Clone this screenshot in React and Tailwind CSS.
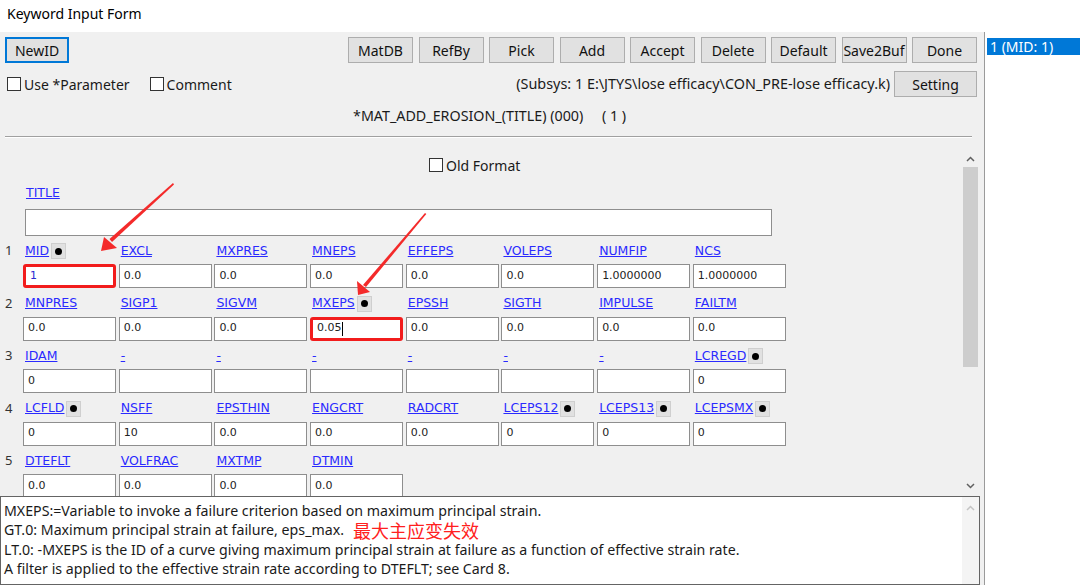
import React from 'react';

const rows = [
  [
    { l: 'MID', dot: true, v: '1', red: true, blue: true },
    { l: 'EXCL', v: '0.0' },
    { l: 'MXPRES', v: '0.0' },
    { l: 'MNEPS', v: '0.0' },
    { l: 'EFFEPS', v: '0.0' },
    { l: 'VOLEPS', v: '0.0' },
    { l: 'NUMFIP', v: '1.0000000' },
    { l: 'NCS', v: '1.0000000' },
  ],
  [
    { l: 'MNPRES', v: '0.0' },
    { l: 'SIGP1', v: '0.0' },
    { l: 'SIGVM', v: '0.0' },
    { l: 'MXEPS', dot: true, v: '0.05', red: true, caret: true },
    { l: 'EPSSH', v: '0.0' },
    { l: 'SIGTH', v: '0.0' },
    { l: 'IMPULSE', v: '0.0' },
    { l: 'FAILTM', v: '0.0' },
  ],
  [
    { l: 'IDAM', v: '0' },
    { l: '-', v: '' },
    { l: '-', v: '' },
    { l: '-', v: '' },
    { l: '-', v: '' },
    { l: '-', v: '' },
    { l: '-', v: '' },
    { l: 'LCREGD', dot: true, v: '0' },
  ],
  [
    { l: 'LCFLD', dot: true, v: '0' },
    { l: 'NSFF', v: '10' },
    { l: 'EPSTHIN', v: '0.0' },
    { l: 'ENGCRT', v: '0.0' },
    { l: 'RADCRT', v: '0.0' },
    { l: 'LCEPS12', dot: true, v: '0' },
    { l: 'LCEPS13', dot: true, v: '0' },
    { l: 'LCEPSMX', dot: true, v: '0' },
  ],
  [
    { l: 'DTEFLT', v: '0.0' },
    { l: 'VOLFRAC', v: '0.0' },
    { l: 'MXTMP', v: '0.0' },
    { l: 'DTMIN', v: '0.0' },
  ],
];

const buttons = ['MatDB', 'RefBy', 'Pick', 'Add', 'Accept', 'Delete', 'Default', 'Save2Buf', 'Done'];

function Btn({ children }) {
  return (
    <div className="h-[26px] w-[65px] bg-[#e1e1e1] border border-[#adadad] flex items-center justify-center text-[14px] text-[#111]">
      {children}
    </div>
  );
}

function Check({ label }) {
  return (
    <div className="flex items-center gap-[3px]">
      <span className="w-[14px] h-[14px] bg-white border border-[#333]" />
      <span className="text-[14px] text-[#1a1a1a]">{label}</span>
    </div>
  );
}

function Dot() {
  return (
    <span className="ml-[2px] w-[15px] h-[16px] bg-[#e1e1e1] border border-[#cfcfcf] flex items-center justify-center">
      <span className="w-[7px] h-[7px] rounded-full bg-black" />
    </span>
  );
}

function Chevron({ up, color = '#606060' }) {
  return (
    <svg width="9" height="6" viewBox="0 0 9 6">
      <polyline
        points={up ? '1,5 4.5,1.5 8,5' : '1,1 4.5,4.5 8,1'}
        fill="none"
        stroke={color}
        strokeWidth="1.5"
      />
    </svg>
  );
}

function Field({ f }) {
  return (
    <div className="w-[93px] flex flex-col">
      <div className="h-[20px] pl-[2px] flex items-center">
        <span className="text-[12.5px] text-[#2a2aff] underline font-['DejaVu_Sans',sans-serif]">{f.l}</span>
        {f.dot && <Dot />}
      </div>
      <div
        className={`mt-[3px] h-[24px] shrink-0 bg-white flex items-center pl-[4px] text-[11px] font-['DejaVu_Sans',sans-serif] ${
          f.red ? 'border-[3px] border-[#f21c1c] rounded-[3px]' : 'border border-[#8e8e8e]'
        } ${f.blue ? 'text-[#2a2ad0]' : 'text-[#222]'}`}
      >
        {f.v}
        {f.caret && <span className="w-[1px] h-[14px] bg-black" />}
      </div>
    </div>
  );
}

export default function App() {
  return (
    <div className="relative w-[1080px] h-[585px] overflow-hidden bg-white flex flex-col font-['Noto_Sans',sans-serif]">
      {/* title bar */}
      <div className="h-[32px] shrink-0 pl-[7px] pt-[3px] text-[14px] text-black leading-[22px]">Keyword Input Form</div>

      <div className="flex flex-1 min-h-0">
        {/* main panel */}
        <div className="w-[984px] bg-[#f0f0f0] flex flex-col">
          <div className="mt-[5px] h-[26px] shrink-0 pl-[5px] pr-[7px] flex">
            <div className="h-[26px] w-[64px] bg-[#e1e1e1] border-2 border-[#0078d7] flex items-center justify-center text-[14px] text-[#111]">
              NewID
            </div>
            <div className="flex-1" />
            <div className="flex gap-[5.5px]">
              {buttons.map((b) => (
                <Btn key={b}>{b}</Btn>
              ))}
            </div>
          </div>

          <div className="mt-[8px] h-[26px] shrink-0 pl-[7px] pr-[7px] flex items-center">
            <Check label="Use *Parameter" />
            <div className="ml-[20px]">
              <Check label="Comment" />
            </div>
            <div className="flex-1" />
            <span className="text-[14.4px] text-[#1a1a1a]">(Subsys: 1 E:\JTYS\lose efficacy\CON_PRE-lose efficacy.k)</span>
            <div className="ml-[4px] h-[26px] w-[83px] bg-[#e1e1e1] border border-[#adadad] flex items-center justify-center text-[14px] text-[#111]">
              Setting
            </div>
          </div>

          <div className="mt-[9px] h-[20px] shrink-0 pl-[353px] flex items-center text-[14.3px] text-[#1a1a1a] whitespace-pre">
            {'*MAT_ADD_EROSION_(TITLE) (000)     ( 1 )'}
          </div>

          <div className="mt-[10px] shrink-0 ml-[5px] w-[967px] h-[2px] border-t border-[#a0a0a0] border-b border-b-white" />

          {/* scrolling form */}
          <div className="mt-[8px] h-[350px] shrink-0 flex overflow-hidden">
            <div className="flex-1 flex flex-col">
              <div className="mt-[10px] h-[18px] shrink-0 pl-[429px] flex items-center">
                <Check label="Old Format" />
              </div>
              <div className="mt-[10px] h-[18px] shrink-0 pl-[26px] flex items-center">
                <span className="text-[12.5px] text-[#2a2aff] underline font-['DejaVu_Sans',sans-serif]">TITLE</span>
              </div>
              <div className="mt-[7px] ml-[25px] w-[747px] h-[27px] shrink-0 bg-white border border-[#8e8e8e]" />
              <div className="mt-[5px] shrink-0 flex flex-col gap-[5.5px]">
                {rows.map((r, i) => (
                  <div key={i} className="flex shrink-0">
                    <div className="w-[23px] pl-[5px] h-[20px] flex items-center text-[13px] text-[#333]">{i + 1}</div>
                    <div className="flex gap-[2.7px]">
                      {r.map((f, j) => (
                        <Field key={j} f={f} />
                      ))}
                    </div>
                  </div>
                ))}
              </div>
            </div>
            <div className="w-[17px] mr-[5px] pt-[4px] flex flex-col items-center">
              <div className="h-[17px] shrink-0 flex items-center justify-center">
                <Chevron up />
              </div>
              <div className="w-[15px] h-[200px] shrink-0 bg-[#cdcdcd]" />
              <div className="flex-1" />
              <div className="h-[17px] shrink-0 mb-[2px] flex items-center justify-center">
                <Chevron />
              </div>
            </div>
          </div>

          {/* help text */}
          <div className="h-[89px] shrink-0 mr-[4px] bg-white border border-[#646464] flex">
            <div className="flex-1 pl-[3px] pt-[4px] text-[14.2px] leading-[19.4px] text-[#1a1a1a]">
              <div className="h-[19.4px]">MXEPS:=Variable to invoke a failure criterion based on maximum principal strain.</div>
              <div className="h-[19.4px] flex items-center">
                <span className="inline-block w-[349px]">GT.0: Maximum principal strain at failure, eps_max.</span>
                <span className="text-[18px] leading-none text-[#ff2020] font-['Noto_Sans_CJK_SC',sans-serif]">最大主应变失效</span>
              </div>
              <div className="h-[19.4px]">LT.0: -MXEPS is the ID of a curve giving maximum principal strain at failure as a function of effective strain rate.</div>
              <div className="h-[19.4px]">A filter is applied to the effective strain rate according to DTEFLT; see Card 8.</div>
            </div>
            <div className="w-[17px] bg-[#f4f4f4] flex flex-col items-center pt-[8px]">
              <Chevron up color="#c4c4c4" />
            </div>
          </div>
        </div>

        {/* id list */}
        <div className="flex-1 bg-white border-l border-[#9a9a9a] pt-[6px] pl-[2px]">
          <div className="h-[17px] bg-[#0078d7] text-white text-[14px] leading-[17px] pl-[3px]">1 (MID: 1)</div>
        </div>
      </div>

      {/* red annotation arrows */}
      <svg className="absolute left-0 top-0 pointer-events-none" width="1080" height="585" viewBox="0 0 1080 585">
        <polygon points="173,183 174,184.5 112,242 109.5,239" fill="#f42a2a" />
        <polygon points="101,251 104,237 117,248" fill="#f42a2a" />
        <polygon points="425,213 426.3,214 366,287 363,285" fill="#f42a2a" />
        <polygon points="358,295 357,281 370,292" fill="#f42a2a" />
      </svg>
    </div>
  );
}
